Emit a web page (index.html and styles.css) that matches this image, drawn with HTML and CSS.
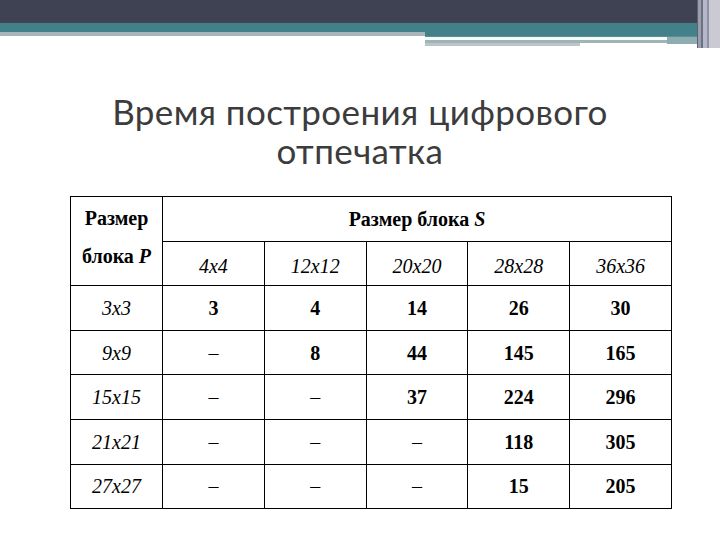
FILE: index.html
```html
<!DOCTYPE html>
<html lang="ru">
<head>
<meta charset="utf-8">
<link rel="stylesheet" href="styles.css">
</head>
<body>
<header class="deck">
  <div class="deck-main">
    <div class="deck-dark"></div>
    <div class="deck-band">
      <div class="band-left">
        <div class="teal-a"></div>
        <div class="gray-a"></div>
      </div>
      <div class="band-right">
        <div class="teal-b"></div>
        <div class="lines">
          <div class="lines-col">
            <div class="ln-white"></div>
            <div class="ln-gray"></div>
            <div class="ln-light"></div>
          </div>
          <div class="lines-fill"></div>
        </div>
      </div>
    </div>
  </div>
  <div class="deck-edge"></div>
</header>

<h1 class="title">Время построения цифрового<br>отпечатка</h1>

<table class="grid">
  <colgroup>
    <col class="c-first">
    <col class="c-col"><col class="c-col"><col class="c-col"><col class="c-col"><col class="c-col">
  </colgroup>
  <tr>
    <td class="corner" rowspan="2"><span class="corner-l1">Размер</span><span class="corner-l2">блока <i>P</i></span></td>
    <td class="head-main" colspan="5">Размер блока <i>S</i></td>
  </tr>
  <tr class="subhead">
    <td>4x4</td><td>12x12</td><td>20x20</td><td>28x28</td><td>36x36</td>
  </tr>
  <tr>
    <td class="rowh">3x3</td><td>3</td><td>4</td><td>14</td><td>26</td><td>30</td>
  </tr>
  <tr>
    <td class="rowh">9x9</td><td class="dash">–</td><td>8</td><td>44</td><td>145</td><td>165</td>
  </tr>
  <tr>
    <td class="rowh">15x15</td><td class="dash">–</td><td class="dash">–</td><td>37</td><td>224</td><td>296</td>
  </tr>
  <tr>
    <td class="rowh">21x21</td><td class="dash">–</td><td class="dash">–</td><td class="dash">–</td><td>118</td><td>305</td>
  </tr>
  <tr>
    <td class="rowh">27x27</td><td class="dash">–</td><td class="dash">–</td><td class="dash">–</td><td>15</td><td>205</td>
  </tr>
</table>
</body>
</html>
```

FILE: styles.css
```css
html, body {
  margin: 0;
  padding: 0;
  background: #ffffff;
}

body {
  width: 720px;
  height: 540px;
  overflow: hidden;
}

/* decorative header */
.deck {
  display: flex;
  height: 48px;
}
.deck-main {
  flex: 1;
  display: flex;
  flex-direction: column;
}
.deck-dark {
  height: 23px;
  background: #3e4253;
  border-bottom: 1px solid #4a4156;
  box-sizing: border-box;
}
.deck-band {
  display: flex;
}
.band-left {
  width: 425px;
  display: flex;
  flex-direction: column;
}
.teal-a {
  height: 9px;
  background: #42818a;
}
.gray-a {
  height: 4px;
  background: #a7b6ba;
}
.band-right {
  flex: 1;
  display: flex;
  flex-direction: column;
}
.teal-b {
  height: 13px;
  background: #42818a;
  border-bottom: 1px solid #5f8c94;
}
.lines {
  display: flex;
}
.lines-col {
  width: 242px;
  display: flex;
  flex-direction: column;
}
.ln-white {
  height: 3px;
  background: #f4fbfb;
}
.ln-gray {
  height: 3px;
  background: #a2b3b5;
}
.ln-light {
  width: 155px;
  height: 3px;
  background: #b9c6c8;
}
.lines-fill {
  flex: 1;
  height: 7px;
  background: #8dadb3;
}
.deck-edge {
  width: 23px;
  background: linear-gradient(to right,
    #5b6072 0, #5b6072 1px,
    #9a9fb0 1px, #9a9fb0 4px,
    #6b7082 4px, #6b7082 6px,
    #b5b8c6 6px, #b5b8c6 10px,
    #8e92a4 10px, #8e92a4 12px,
    #cac9d4 12px, #cac9d4 23px);
}

/* title */
.title {
  margin: 44px 0 0 0;
  font-family: "Lato", "Open Sans", sans-serif;
  font-weight: normal;
  font-size: 35px;
  line-height: 39px;
  color: #3c3c3c;
  text-align: center;
  letter-spacing: 0.4px;
}

/* table */
.grid {
  margin: 26px 0 0 70px;
  width: 601px;
  border-collapse: collapse;
  table-layout: fixed;
  font-family: "Liberation Serif", "Times New Roman", serif;
  font-size: 20px;
  color: #000;
}
.c-first { width: 92px; }
.c-col { width: 101.8px; }

.grid td {
  border: 1px solid #000;
  height: 43.6px;
  padding: 0;
  text-align: center;
  vertical-align: middle;
  font-weight: bold;
  line-height: 24px;
}
.grid td.corner {
  vertical-align: top;
  padding: 2px 0 0 0;
}
.corner-l1, .corner-l2 {
  display: block;
  line-height: 38px;
}
.grid td.head-main {
  font-weight: bold;
}
.subhead td {
  font-weight: normal;
  font-style: italic;
  padding-top: 5px;
  height: 38.6px;
}
.grid td.rowh {
  font-weight: normal;
  font-style: italic;
}
.grid td.dash {
  font-weight: normal;
}
```
